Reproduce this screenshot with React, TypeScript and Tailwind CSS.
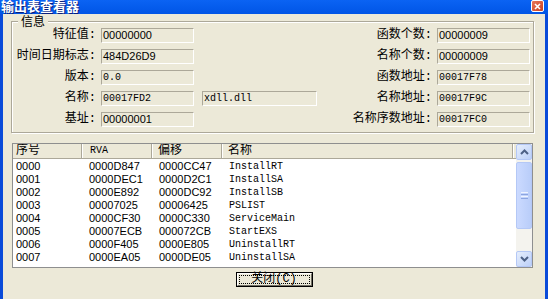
import React from "react";

const SANS = { fontFamily: '"Liberation Sans", Arial, sans-serif' };
const MONO = { fontFamily: '"Liberation Mono", "Noto Sans CJK SC", monospace' };
const CJK = { fontFamily: '"Liberation Mono", "Noto Sans CJK SC", sans-serif' };
const TITLE = { fontFamily: '"Liberation Sans", "Noto Sans CJK SC", sans-serif' };

type Val = { v: string; mono?: boolean };

function Field({ val, w }: { val: Val; w: string }) {
  return (
    <div
      className={`${w} h-[15px] border-t border-l border-t-[#aca899] border-l-[#aca899] border-b border-r border-b-white border-r-white flex items-center pl-[1px] overflow-hidden text-black`}
    >
      {val.mono ? (
        <span className="text-[10px] leading-[13px] whitespace-pre" style={MONO}>
          {val.v}
        </span>
      ) : (
        <span className="text-[11px] leading-[13px] whitespace-pre" style={SANS}>
          {val.v}
        </span>
      )}
    </div>
  );
}

const rowsInfo: {
  l1: string;
  v1: Val;
  mid?: Val;
  l2: string;
  v2: Val;
}[] = [
  { l1: "特征值:", v1: { v: "00000000" }, l2: "函数个数:", v2: { v: "00000009" } },
  { l1: "时间日期标志:", v1: { v: "484D26D9" }, l2: "名称个数:", v2: { v: "00000009" } },
  { l1: "版本:", v1: { v: "0.0", mono: true }, l2: "函数地址:", v2: { v: "00017F78", mono: true } },
  {
    l1: "名称:",
    v1: { v: "00017FD2", mono: true },
    mid: { v: "xdll.dll", mono: true },
    l2: "名称地址:",
    v2: { v: "00017F9C", mono: true },
  },
  { l1: "基址:", v1: { v: "00000001" }, l2: "名称序数地址:", v2: { v: "00017FC0", mono: true } },
];

const listRows = [
  ["0000", "0000D847", "0000CC47", "InstallRT"],
  ["0001", "0000DEC1", "0000D2C1", "InstallSA"],
  ["0002", "0000E892", "0000DC92", "InstallSB"],
  ["0003", "00007025", "00006425", "PSLIST"],
  ["0004", "0000CF30", "0000C330", "ServiceMain"],
  ["0005", "00007ECB", "000072CB", "StartEXS"],
  ["0006", "0000F405", "0000E805", "UninstallRT"],
  ["0007", "0000EA05", "0000DE05", "UninstallSA"],
];

function ScrollBtn({ dir }: { dir: "up" | "down" }) {
  return (
    <div className="w-[16px] h-[16px] rounded-[2px] border border-[#b4c8f6] bg-gradient-to-br from-[#e6eefc] to-[#bcd0f8] flex items-center justify-center">
      <svg width="9" height="6" viewBox="0 0 9 6">
        {dir === "up" ? (
          <path d="M1 5 L4.5 1.5 L8 5" stroke="#4d6185" strokeWidth="2" fill="none" />
        ) : (
          <path d="M1 1 L4.5 4.5 L8 1" stroke="#4d6185" strokeWidth="2" fill="none" />
        )}
      </svg>
    </div>
  );
}

export default function App() {
  return (
    <div className="w-[548px] h-[299px] overflow-hidden flex flex-col bg-[#0a4bd9]">
      {/* title bar */}
      <div className="h-[14px] shrink-0 flex items-center justify-between bg-gradient-to-b from-[#0b63f3] to-[#0155e6]">
        <span
          className="pl-[1px] text-white font-bold text-[13px] leading-[14px] [text-shadow:1px_1px_0_#0a1e7a] whitespace-nowrap"
          style={TITLE}
        >
          输出表查看器
        </span>
        <div className="mr-[4px] self-start w-[13px] h-[12px] rounded-[2px] border border-white bg-gradient-to-br from-[#e8755a] to-[#c9401f] flex items-center justify-center">
          <svg width="7" height="7" viewBox="0 0 7 7">
            <path d="M1 1 L6 6 M6 1 L1 6" stroke="white" strokeWidth="1.6" />
          </svg>
        </div>
      </div>

      {/* body */}
      <div className="flex-1 flex pl-[3px] pr-[3px]">
        <div className="flex-1 bg-[#ece9d8] flex flex-col">
          {/* group box */}
          <div className="relative mt-[7px] ml-[8px] w-[523px] h-[112px] border border-[#aca899] shadow-[inset_1px_1px_0_#fff,1px_1px_0_#fff] shrink-0">
            <span
              className="absolute left-[6px] top-[-6px] px-[3px] bg-[#ece9d8] text-[12px] leading-[12px] text-black"
              style={TITLE}
            >
              信息
            </span>
            <div className="pt-[6px] flex flex-col gap-[6px]">
              {rowsInfo.map((r, i) => (
                <div key={i} className="flex items-center h-[15px]">
                  <div
                    className="w-[84px] text-right text-[12px] leading-[15px] text-black whitespace-nowrap"
                    style={CJK}
                  >
                    {r.l1}
                  </div>
                  <div className="ml-[5px]">
                    <Field val={r.v1} w="w-[93px]" />
                  </div>
                  {r.mid ? (
                    <div className="ml-[8px]">
                      <Field val={r.mid} w="w-[115px]" />
                    </div>
                  ) : (
                    <div className="ml-[8px] w-[115px]" />
                  )}
                  <div
                    className="w-[115px] text-right text-[12px] leading-[15px] text-black whitespace-nowrap"
                    style={CJK}
                  >
                    {r.l2}
                  </div>
                  <div className="ml-[5px]">
                    <Field val={r.v2} w="w-[93px]" />
                  </div>
                </div>
              ))}
            </div>
          </div>

          {/* list view */}
          <div className="mt-[10px] ml-[9px] w-[521px] h-[125px] border border-[#8e8f8f] bg-white flex shrink-0">
            <div className="flex-1 flex flex-col overflow-hidden">
              <div className="h-[15px] shrink-0 flex bg-[#ece9d8] border-b border-[#aca899]">
                {[
                  { t: "序号", w: "w-[69px]", pl: "pl-[3px]", f: CJK, s: "text-[12px]" },
                  { t: "RVA", w: "w-[70px]", pl: "pl-[8px]", f: MONO, s: "text-[10px]" },
                  { t: "偏移", w: "w-[70px]", pl: "pl-[6px]", f: CJK, s: "text-[12px]" },
                  { t: "名称", w: "w-[291px]", pl: "pl-[6px]", f: CJK, s: "text-[12px]" },
                ].map((h, i) => (
                  <div
                    key={i}
                    className={`${h.w} ${h.pl} ${h.s} h-full flex items-center border-r border-[#aca899] shadow-[1px_0_0_#fff] text-black leading-[14px]`}
                    style={h.f}
                  >
                    {h.t}
                  </div>
                ))}
              </div>
              <div className="pt-[1px] flex flex-col">
                {listRows.map((r, i) => (
                  <div key={i} className="h-[13px] flex items-center text-black">
                    <div className="w-[69px] pl-[3px] text-[11px] leading-[13px]" style={SANS}>
                      {r[0]}
                    </div>
                    <div className="w-[70px] pl-[7px] text-[11px] leading-[13px]" style={SANS}>
                      {r[1]}
                    </div>
                    <div className="w-[70px] pl-[7px] text-[11px] leading-[13px]" style={SANS}>
                      {r[2]}
                    </div>
                    <div className="pl-[7px] text-[10px] leading-[13px]" style={MONO}>
                      {r[3]}
                    </div>
                  </div>
                ))}
              </div>
            </div>
            {/* scrollbar */}
            <div className="w-[16px] bg-[#f4f3ee] flex flex-col">
              <ScrollBtn dir="up" />
              <div className="mt-[2px] h-[67px] rounded-[2px] border border-[#b4c8f6] bg-gradient-to-r from-[#cbdaff] to-[#b9cdf9] flex items-center justify-center">
                <div className="flex flex-col gap-[1px]">
                  <div className="w-[7px] h-[1px] bg-[#eef3fe]" />
                  <div className="w-[7px] h-[1px] bg-[#8ca5e0]" />
                  <div className="w-[7px] h-[1px] bg-[#eef3fe]" />
                  <div className="w-[7px] h-[1px] bg-[#8ca5e0]" />
                </div>
              </div>
              <div className="flex-1" />
              <ScrollBtn dir="down" />
            </div>
          </div>

          {/* button */}
          <div className="mt-[4px] flex justify-center">
            <div className="w-[77px] h-[15px] border border-black bg-[#ece9d8] flex">
              <div className="flex-1 border-t border-l border-t-white border-l-white border-b border-r border-b-[#716f64] border-r-[#716f64] p-[1px] flex">
                <div
                  className="flex-1 border border-dotted border-black flex items-center justify-center text-[12px] leading-[11px] text-black"
                  style={CJK}
                >
                  关闭(C)
                </div>
              </div>
            </div>
          </div>
        </div>
      </div>
    </div>
  );
}
